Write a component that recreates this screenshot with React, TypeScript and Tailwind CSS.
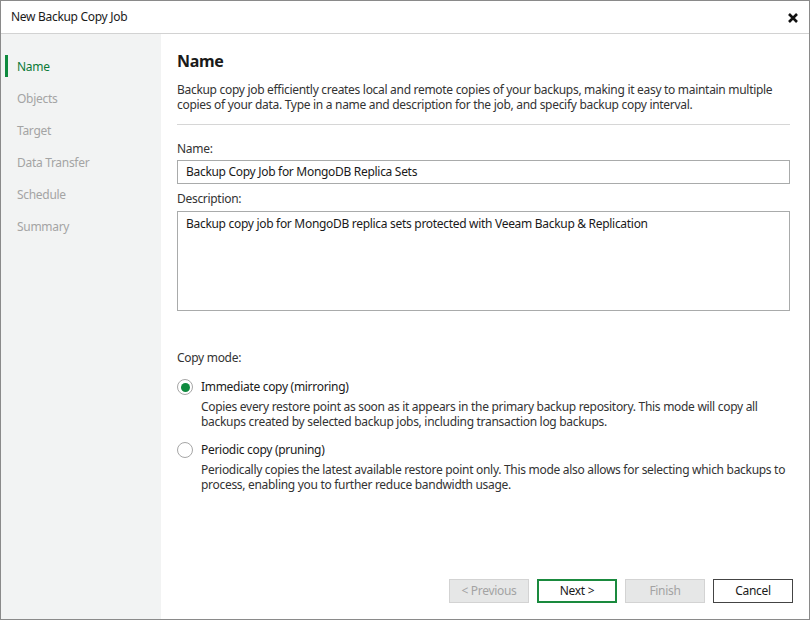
const font = { fontFamily: '"Noto Sans", "Open Sans", sans-serif' };

const steps = ["Name", "Objects", "Target", "Data Transfer", "Schedule", "Summary"];

function Radio({ checked }: { checked?: boolean }) {
  return (
    <span className="flex h-4 w-4 shrink-0 items-center justify-center rounded-full border border-[#a6a6a6] bg-white">
      {checked && <span className="h-[9px] w-[9px] rounded-full bg-[#0e8a3e]" />}
    </span>
  );
}

function Button({ label, variant }: { label: string; variant: "disabled" | "primary" | "normal" }) {
  const cls =
    variant === "disabled"
      ? "border border-[#d3d3d3] bg-[#e6e7e7] text-[#a3a3a3]"
      : variant === "primary"
      ? "border-2 border-[#1a8a3e] bg-white text-[#1a1a1a]"
      : "border border-[#444] bg-white text-[#1a1a1a]";
  return (
    <div className={`flex h-6 w-20 items-center justify-center text-[12px] ${cls}`}>{label}</div>
  );
}

export default function App() {
  return (
    <div
      className="flex h-[620px] w-[810px] flex-col border border-[#8a8a8a] bg-white text-[12px] tracking-[-0.3px] text-[#333]"
      style={font}
    >
      <div className="flex h-[33px] shrink-0 items-center justify-between border-b border-[#d2d2d2] pl-[10px] pr-[11px]">
        <span className="text-[12px] text-[#1a1a1a]">New Backup Copy Job</span>
        <svg width="10" height="10" viewBox="0 0 10 10" className="mt-px">
          <path d="M1 1 L9 9 M9 1 L1 9" stroke="#111" strokeWidth="2.6" />
        </svg>
      </div>
      <div className="flex min-h-0 flex-1">
        <div className="flex w-[160px] shrink-0 flex-col bg-[#f2f3f3] pt-4">
          {steps.map((s, i) => (
            <div key={s} className="flex h-8 items-center">
              <span className={`ml-[4px] h-[22px] w-[3px] ${i === 0 ? "bg-[#0e8a3e]" : ""}`} />
              <span className={`ml-[9px] leading-[15px] ${i === 0 ? "text-[#0b7a38]" : "text-[#a4a4a4]"}`}>{s}</span>
            </div>
          ))}
        </div>
        <div className="flex flex-1 flex-col">
          <div className="flex flex-1 flex-col pl-4 pr-[19px]">
            <h1 className="mt-[17px] text-[16px] font-bold leading-5 text-[#1a1a1a]">Name</h1>
            <p className="mt-[11px] leading-[15px]">
              Backup copy job efficiently creates local and remote copies of your backups, making it easy to maintain multiple
              copies of your data. Type in a name and description for the job, and specify backup copy interval.
            </p>
            <div className="mt-3 h-px bg-[#d6d6d6]" />
            <div className="mt-4 leading-[15px]">Name:</div>
            <div className="mt-[4px] flex h-6 items-center border border-[#a9abab] px-2 text-[#1a1a1a]">
              Backup Copy Job for MongoDB Replica Sets
            </div>
            <div className="mt-[7px] leading-[15px]">Description:</div>
            <div className="mt-[5px] h-[100px] border border-[#a9abab] px-2 pt-[4px] leading-[15px] text-[#1a1a1a]">
              Backup copy job for MongoDB replica sets protected with Veeam Backup &amp; Replication
            </div>
            <div className="mt-[39px] leading-[15px]">Copy mode:</div>
            <div className="mt-[14px] flex items-center gap-2 leading-4 text-[#1a1a1a]">
              <Radio checked />
              <span>Immediate copy (mirroring)</span>
            </div>
            <p className="ml-6 mt-[4px] leading-[15px]">
              Copies every restore point as soon as it appears in the primary backup repository. This mode will copy all
              backups created by selected backup jobs, including transaction log backups.
            </p>
            <div className="mt-[13px] flex items-center gap-2 leading-4 text-[#1a1a1a]">
              <Radio />
              <span>Periodic copy (pruning)</span>
            </div>
            <p className="ml-6 mt-[4px] leading-[15px]">
              Periodically copies the latest available restore point only. This mode also allows for selecting which backups to
              process, enabling you to further reduce bandwidth usage.
            </p>
          </div>
          <div className="flex justify-end gap-2 pb-4 pr-4">
            <Button label="< Previous" variant="disabled" />
            <Button label="Next >" variant="primary" />
            <Button label="Finish" variant="disabled" />
            <Button label="Cancel" variant="normal" />
          </div>
        </div>
      </div>
    </div>
  );
}
